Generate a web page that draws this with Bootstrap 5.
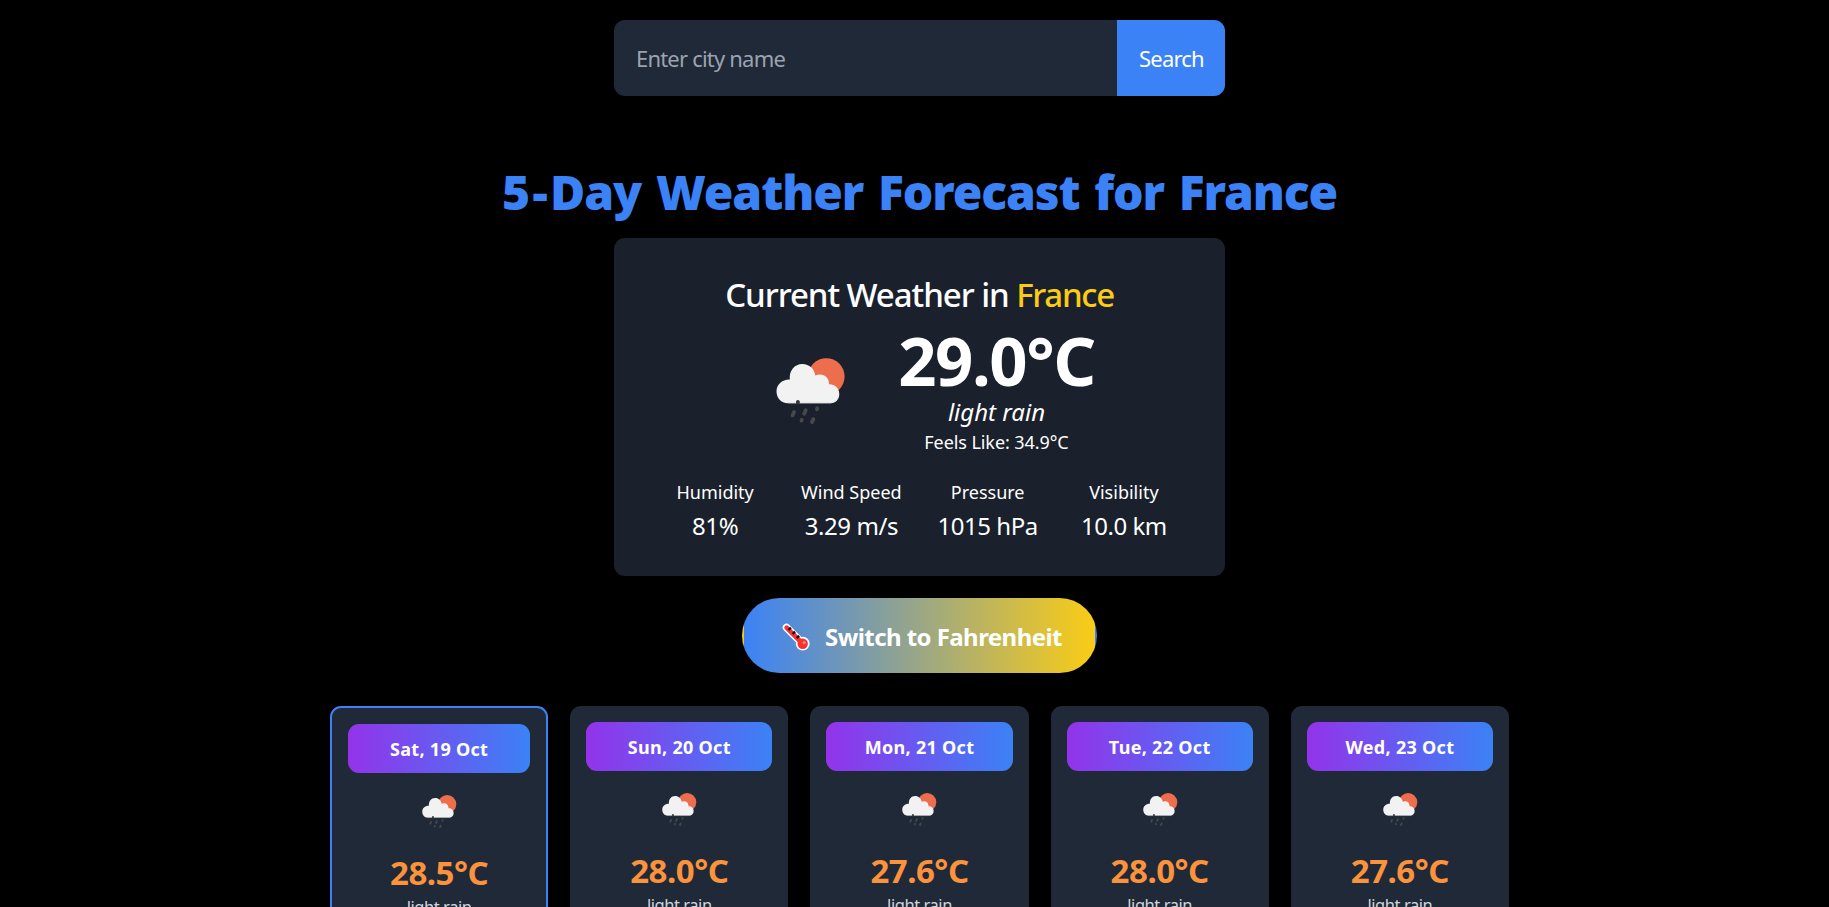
<!DOCTYPE html>
<html lang="en">
<head>
<meta charset="utf-8">
<meta name="viewport" content="width=device-width, initial-scale=1">
<title>Weather Forecast</title>
<link href="https://cdn.jsdelivr.net/npm/bootstrap@5.3.0/dist/css/bootstrap.min.css" rel="stylesheet">
<style>
html{overflow:hidden}
body{background:#000;color:#fff;font-family:"Noto Sans","Open Sans",sans-serif;height:907px;overflow:hidden;padding:20px 0 0 10px}
.panel{width:611px}
.search-row{height:76px;border-radius:11px;overflow:hidden}
.search-row .form-control,.search-row .form-control:focus{background:#1f2937;color:#fff;border:0;border-radius:0;box-shadow:none;font-size:22px;letter-spacing:-.8px;padding:1px 20px 0 22px}
.search-row .form-control::placeholder{color:#9ca3af;opacity:1}
.search-row .btn{width:108px;background:#3b82f6;color:#fff;border:0;border-radius:0;font-size:22px;letter-spacing:-.8px;padding:1px 0 0 1px}
.headline{margin-top:67px;height:75px;line-height:57px;font-size:48px;font-weight:900;letter-spacing:-1.1px;word-spacing:3.4px;color:#3b82f6}
.headline .lead-in{letter-spacing:2.4px}
.current{height:338px;background:#1a212c;border-radius:11px;padding:37px 44px 0}
.current h2{font-size:33px;line-height:40px;font-weight:500;letter-spacing:-1.05px}
.city{color:#facc15;letter-spacing:-1.3px}
.now{gap:22px;height:132px;margin-top:9px}
.degrees{font-size:67px;line-height:78px;font-weight:700;letter-spacing:-1.44px}
.sky{font-size:24px;line-height:25px;font-style:italic}
.feels{font-size:18px;line-height:36px;letter-spacing:-.08px}
.stats{margin-top:21px;gap:22px}
.stats>div{flex:1 1 0;white-space:nowrap}
.stat-name{font-size:18px;line-height:31px}
.stat-val{font-size:24px;line-height:35px;letter-spacing:-.45px}
.toggle{width:355px;height:75px;margin-top:22px;border:2px solid transparent;border-radius:38px;background:linear-gradient(to right,#3b82f6,#facc15);color:#fff;font-size:24px;font-weight:700;letter-spacing:-.56px;gap:15px;padding:2px 0 0 5px}
.toggle svg{width:28px;height:28px}
.days{display:grid;grid-template-columns:repeat(5,minmax(0,1fr));width:1179px;gap:22px;margin-top:33px}
.day{height:330px;background:#1f2937;border-radius:11px;padding:16px}
.day.today{border:2px solid #3b82f6}
.date{height:49px;border-radius:11px;background:linear-gradient(to right,#9333ea,#3b82f6);font-size:18px;line-height:51px;font-weight:700;letter-spacing:.3px}
.day svg{display:block;margin:5px auto 0}
.high{margin-top:8px;font-size:33px;line-height:42px;font-weight:700;letter-spacing:-.48px;color:#fb923c}
.desc{font-size:16.5px;line-height:26px;letter-spacing:-.45px;color:#d1d5db}
</style>
</head>
<body class="d-flex flex-column align-items-center">
<svg width="0" height="0" class="position-absolute" aria-hidden="true">
  <symbol id="rain" viewBox="-16 -16.500 132 132">
    <circle cx="66.3" cy="36" r="18.3" fill="#ec6e4c"/>
    <path d="M28 62.8C21 62.8 16.5 57.500 16.500 51C16.500 44 22 38.800 29.800 39C29 30 34.500 23.500 42.300 23.500C49.500 23.500 54.500 28.500 55.300 35C62 31.800 69.500 36 69 43.800C74.500 43.500 79.300 47.500 79.300 53.500C79.300 59 75.500 62.800 71 62.800Z" fill="#f2f2f2"/>
    <path d="M28 62.900H71" stroke="#777d84" stroke-width=".8"/>
    <g stroke="#48484a" stroke-width="3.800" stroke-linecap="round">
      <path d="M37.900 61.300v.8" stroke="#333"/>
      <path d="M34 71.500l-1.400 3.400M45.700 69.800l-1.500 3.400M57.300 67.800l-.4 1M41.800 79.300l-.3 .8M53.300 78.600l-1.300 2.900"/>
    </g>
  </symbol>
</svg>

<form class="panel search-row d-flex flex-shrink-0">
  <input class="form-control flex-fill" type="text" placeholder="Enter city name">
  <button class="btn flex-shrink-0" type="button">Search</button>
</form>

<h1 class="headline mb-0 text-center flex-shrink-0"><span class="lead-in">5-</span>Day Weather Forecast for France</h1>

<section class="panel current text-center flex-shrink-0">
  <h2 class="mb-0">Current Weather in <span class="city">France</span></h2>
  <div class="now d-flex justify-content-center align-items-center">
    <svg width="132" height="132"><use href="#rain"/></svg>
    <div>
      <div class="degrees">29.0°C</div>
      <div class="sky">light rain</div>
      <div class="feels">Feels Like: 34.9°C</div>
    </div>
  </div>
  <div class="stats d-flex">
    <div><div class="stat-name">Humidity</div><div class="stat-val">81%</div></div>
    <div><div class="stat-name">Wind Speed</div><div class="stat-val">3.29 m/s</div></div>
    <div><div class="stat-name">Pressure</div><div class="stat-val">1015 hPa</div></div>
    <div><div class="stat-name">Visibility</div><div class="stat-val">10.0 km</div></div>
  </div>
</section>

<button class="toggle d-flex align-items-center justify-content-center flex-shrink-0" type="button">
  <svg viewBox="0 0 28 28" fill="none" stroke-linecap="round">
    <path d="M4.500 4.500L20 20" stroke="#fff" stroke-width="7.600"/>
    <circle cx="20.700" cy="20.700" r="6.900" fill="#fff"/>
    <path d="M4.600 4.600L20 20" stroke="#f8312f" stroke-width="4.600"/>
    <circle cx="20.700" cy="20.700" r="5.200" fill="#f8312f"/>
    <circle cx="22.200" cy="19.500" r="1.600" fill="#ff8687"/>
    <path d="M6.500 7l2.400-2.400M10.600 11l2.400-2.400M14.700 15.100l2.400-2.400" stroke="#111" stroke-width="2.300" stroke-linecap="butt"/>
  </svg>
  <span>Switch to Fahrenheit</span>
</button>

<div class="days flex-shrink-0 text-center">
  <div class="day today"><div class="date">Sat, 19 Oct</div><svg width="66" height="66"><use href="#rain"/></svg><div class="high">28.5°C</div><div class="desc">light rain</div></div>
  <div class="day"><div class="date">Sun, 20 Oct</div><svg width="66" height="66"><use href="#rain"/></svg><div class="high">28.0°C</div><div class="desc">light rain</div></div>
  <div class="day"><div class="date">Mon, 21 Oct</div><svg width="66" height="66"><use href="#rain"/></svg><div class="high">27.6°C</div><div class="desc">light rain</div></div>
  <div class="day"><div class="date">Tue, 22 Oct</div><svg width="66" height="66"><use href="#rain"/></svg><div class="high">28.0°C</div><div class="desc">light rain</div></div>
  <div class="day"><div class="date">Wed, 23 Oct</div><svg width="66" height="66"><use href="#rain"/></svg><div class="high">27.6°C</div><div class="desc">light rain</div></div>
</div>
<script src="https://cdn.jsdelivr.net/npm/bootstrap@5.3.0/dist/js/bootstrap.bundle.min.js"></script>
</body>
</html>
